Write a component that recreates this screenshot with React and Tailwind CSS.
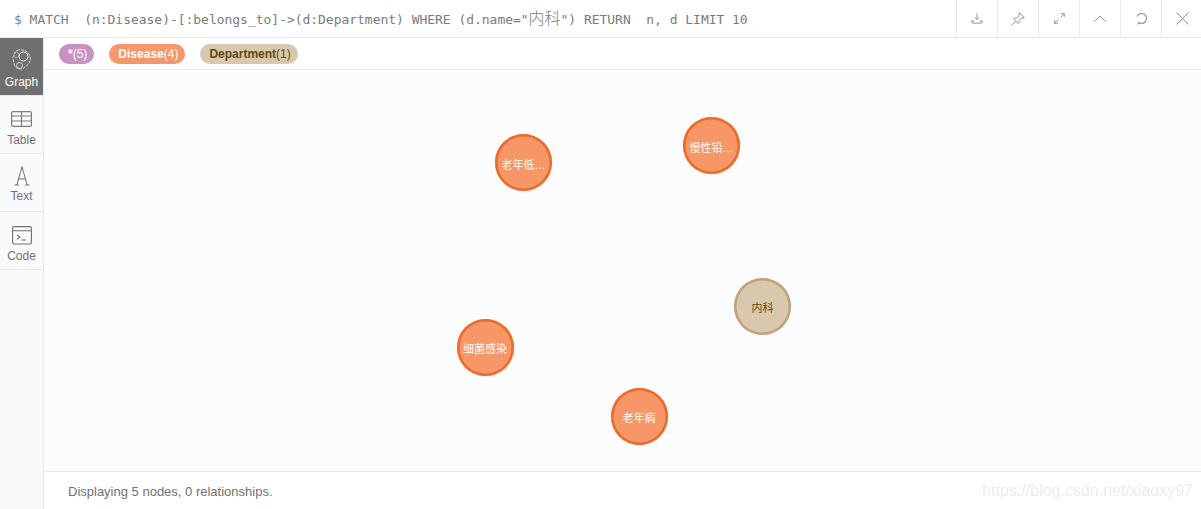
import React from 'react';

const cjk = '"Liberation Sans", "Noto Sans CJK SC", sans-serif';

const nodes = [
  { label: '老年低…', x: 495, y: 134, kind: 'disease', dy: 6 },
  { label: '慢性铅…', x: 683, y: 117, kind: 'disease', dy: 6 },
  { label: '内科', x: 734, y: 277.5, kind: 'dept', dy: 4 },
  { label: '细菌感染', x: 456.5, y: 319, kind: 'disease', dy: 3 },
  { label: '老年病', x: 610.5, y: 388, kind: 'disease', dy: 3 },
];

function GraphIcon() {
  return (
    <svg width="20" height="22" viewBox="0 0 20 22" fill="none" stroke="#d8d8d8" strokeWidth="1">
      <path d="M5 1.500c3-1.200 7-1 9.500 1s4 5 3.800 8-2 5-4 6.500-4 3.500-7 3-5-3-5.500-6S0.500 9 1.500 6.500 3 2.300 5 1.500z" strokeDasharray="3 1" />
      <circle cx="11.500" cy="7.500" r="4.500" stroke="#f2f2f2" />
      <circle cx="7.500" cy="16.500" r="3" />
      <circle cx="4.500" cy="6" r="2.500" strokeDasharray="2 1" />
    </svg>
  );
}

function TableIcon() {
  return (
    <svg className="mt-[2px]" width="21" height="16" viewBox="0 0 21 16" fill="none" stroke="#7b7b7b" strokeWidth="1.2">
      <rect x="0.6" y="0.6" width="19.8" height="14.8" rx="1.5" />
      <path d="M0.6 5h19.8M0.6 10h19.8M10.5 0.6v14.8" />
    </svg>
  );
}

function TextIcon() {
  return (
    <svg width="16" height="20" viewBox="0 0 16 20" fill="none" stroke="#717172" strokeWidth="1">
      <path d="M8 0.800L2.800 19M8 0.800L13.200 19M4.500 13h7M0.500 19h4.500M11 19h4.500" />
    </svg>
  );
}

function CodeIcon() {
  return (
    <svg className="mt-[2px]" width="20" height="19" viewBox="0 0 20 19" fill="none" stroke="#6f6f6f" strokeWidth="1.1">
      <rect x="0.6" y="0.6" width="18.8" height="17.4" rx="1.5" />
      <path d="M0.6 4.800h18.8M5 9l3 2.200L5 13.400M9.500 14h4.500" />
    </svg>
  );
}

function SideItem({ label, active, labelClass = 'mt-[-1px]', children }) {
  return (
    <div className={`h-[58px] flex flex-col items-center border-b border-[#e6e9ef] ${active ? 'bg-[#6f6f6f] text-white' : 'text-[#717172]'}`}>
      <div className="h-[32px] mt-[6px] shrink-0 flex items-center justify-center">{children}</div>
      <span className={`text-[12px] leading-[14px] ${labelClass}`}>{label}</span>
    </div>
  );
}

function HeadBtn({ children }) {
  return (
    <div className="w-[41px] shrink-0 h-full flex items-center justify-center border-l border-[#e6e9ef]">{children}</div>
  );
}

function Pill({ bg, color, name, count }) {
  return (
    <span className={`h-[20px] pl-[9px] pr-[7px] rounded-full text-[12px] leading-[20px] ${bg} ${color}`}>
      <span className="font-bold">{name}</span>({count})
    </span>
  );
}

function Node({ node }) {
  const dept = node.kind === 'dept';
  return (
    <div
      className={`absolute w-[57px] h-[57px] rounded-full flex items-center justify-center text-[11px] whitespace-nowrap ${
        dept
          ? 'bg-[#d9c8ae] shadow-[inset_0_0_0_2.5px_#c0a378] text-[#604a0e]'
          : 'bg-[#f79767] shadow-[inset_0_0_0_2.5px_#f36924] text-white'
      }`}
      style={{ left: node.x - 44, top: node.y - 70 }}
    >
      <span style={{ marginTop: node.dy }}>{node.label}</span>
    </div>
  );
}

export default function App() {
  return (
    <div className="w-[1201px] h-[509px] overflow-hidden bg-white flex flex-col" style={{ fontFamily: cjk }}>
      {/* query bar */}
      <div className="h-[38px] shrink-0 flex items-center border-b border-[#e6e9ef] bg-white">
        <div
          className="flex-1 pl-[14px] pt-[1px] text-[13px] leading-[20px] tracking-[-0.03px] text-[#7b7b7b] whitespace-pre"
          style={{ fontFamily: '"DejaVu Sans Mono", "Noto Sans CJK SC", monospace' }}
        >
          <span className="text-[#6b8ba0]">$</span> MATCH  (n:Disease)-[:belongs_to]-&gt;(d:Department) WHERE (d.name="<span className="text-[16px] leading-none font-light" style={{ fontFamily: '"Noto Sans CJK SC", sans-serif' }}>内科</span>") RETURN  n, d LIMIT 10
        </div>
        <div className="flex h-full w-[245px] shrink-0">
          <HeadBtn>
            <svg width="12" height="11" viewBox="0 0 14 13" fill="none" stroke="#8e8e8e" strokeWidth="1.1">
              <path d="M7 0.500v7M4.500 5.500L7 8l2.500-2.500M1 8.500v2.500a1 1 0 0 0 1 1h10a1 1 0 0 0 1-1V8.500M1 9.500h3M10 9.500h3" />
            </svg>
          </HeadBtn>
          <HeadBtn>
            <svg width="14" height="14" viewBox="0 0 14 14" fill="none" stroke="#8e8e8e" strokeWidth="1">
              <path d="M8.500 0.800l4.700 4.700-1.200 0.800-1.300-0.300-2.600 2.600 0.200 2-1 1-4.700-4.700 1-1 2 0.200 2.600-2.600-0.300-1.300zM4.200 9.800L0.800 13.200" />
            </svg>
          </HeadBtn>
          <HeadBtn>
            <svg width="11" height="11" viewBox="0 0 13 13" fill="none" stroke="#8e8e8e" strokeWidth="1.1">
              <path d="M8 5l4.200-4.200M8.500 0.800h3.700v3.700M5 8l-4.200 4.200M0.800 8.500v3.700h3.700" />
            </svg>
          </HeadBtn>
          <HeadBtn>
            <svg width="12" height="7" viewBox="0 0 12 7" fill="none" stroke="#8e8e8e" strokeWidth="1">
              <path d="M0.500 6.500L6 1l5.500 5.500" />
            </svg>
          </HeadBtn>
          <HeadBtn>
            <svg width="13" height="13" viewBox="0 0 13 13" fill="none" stroke="#8e8e8e" strokeWidth="1.1">
              <path d="M1.900 4.500A5 5 0 1 1 3.500 10.500M3.500 10.500L3 12.500M3.500 10.500L5.500 11" />
            </svg>
          </HeadBtn>
          <HeadBtn>
            <svg width="13" height="13" viewBox="0 0 13 13" fill="none" stroke="#8e8e8e" strokeWidth="1">
              <path d="M0.500 0.500l12 12M12.500 0.500l-12 12" />
            </svg>
          </HeadBtn>
        </div>
      </div>

      <div className="flex-1 flex min-h-0">
        {/* left tabs */}
        <div className="w-[44px] shrink-0 bg-[#f9fafc] border-r border-[#e6e9ef]">
          <SideItem label="Graph" active><GraphIcon /></SideItem>
          <SideItem label="Table"><TableIcon /></SideItem>
          <SideItem label="Text" labelClass="mt-[-3px]"><TextIcon /></SideItem>
          <SideItem label="Code"><CodeIcon /></SideItem>
        </div>

        <div className="flex-1 flex flex-col min-w-0">
          {/* legend */}
          <div className="h-[32px] shrink-0 flex items-center gap-[15px] pl-[15px] bg-white border-b border-[#e6e9ef]">
            <Pill bg="bg-[#c990c0]" color="text-white" name="*" count={5} />
            <Pill bg="bg-[#f79767]" color="text-white" name="Disease" count={4} />
            <Pill bg="bg-[#d9c8ae]" color="text-[#604a0e]" name="Department" count={1} />
          </div>

          {/* graph canvas */}
          <div className="relative flex-1 bg-[#fbfcfe]">
            {nodes.map((n) => <Node key={n.label} node={n} />)}
          </div>

          {/* footer */}
          <div className="relative h-[38px] shrink-0 flex items-center pl-[24px] pt-[2px] bg-white border-t border-[#e6e9ef] text-[13px] text-[#717172]">
            Displaying 5 nodes, 0 relationships.
            <span className="absolute right-[8px] top-[9px] text-[16px] leading-[20px] text-[#ebebeb] blur-[0.4px]">https://blog.csdn.net/xiaoxy97</span>
          </div>
        </div>
      </div>
    </div>
  );
}
